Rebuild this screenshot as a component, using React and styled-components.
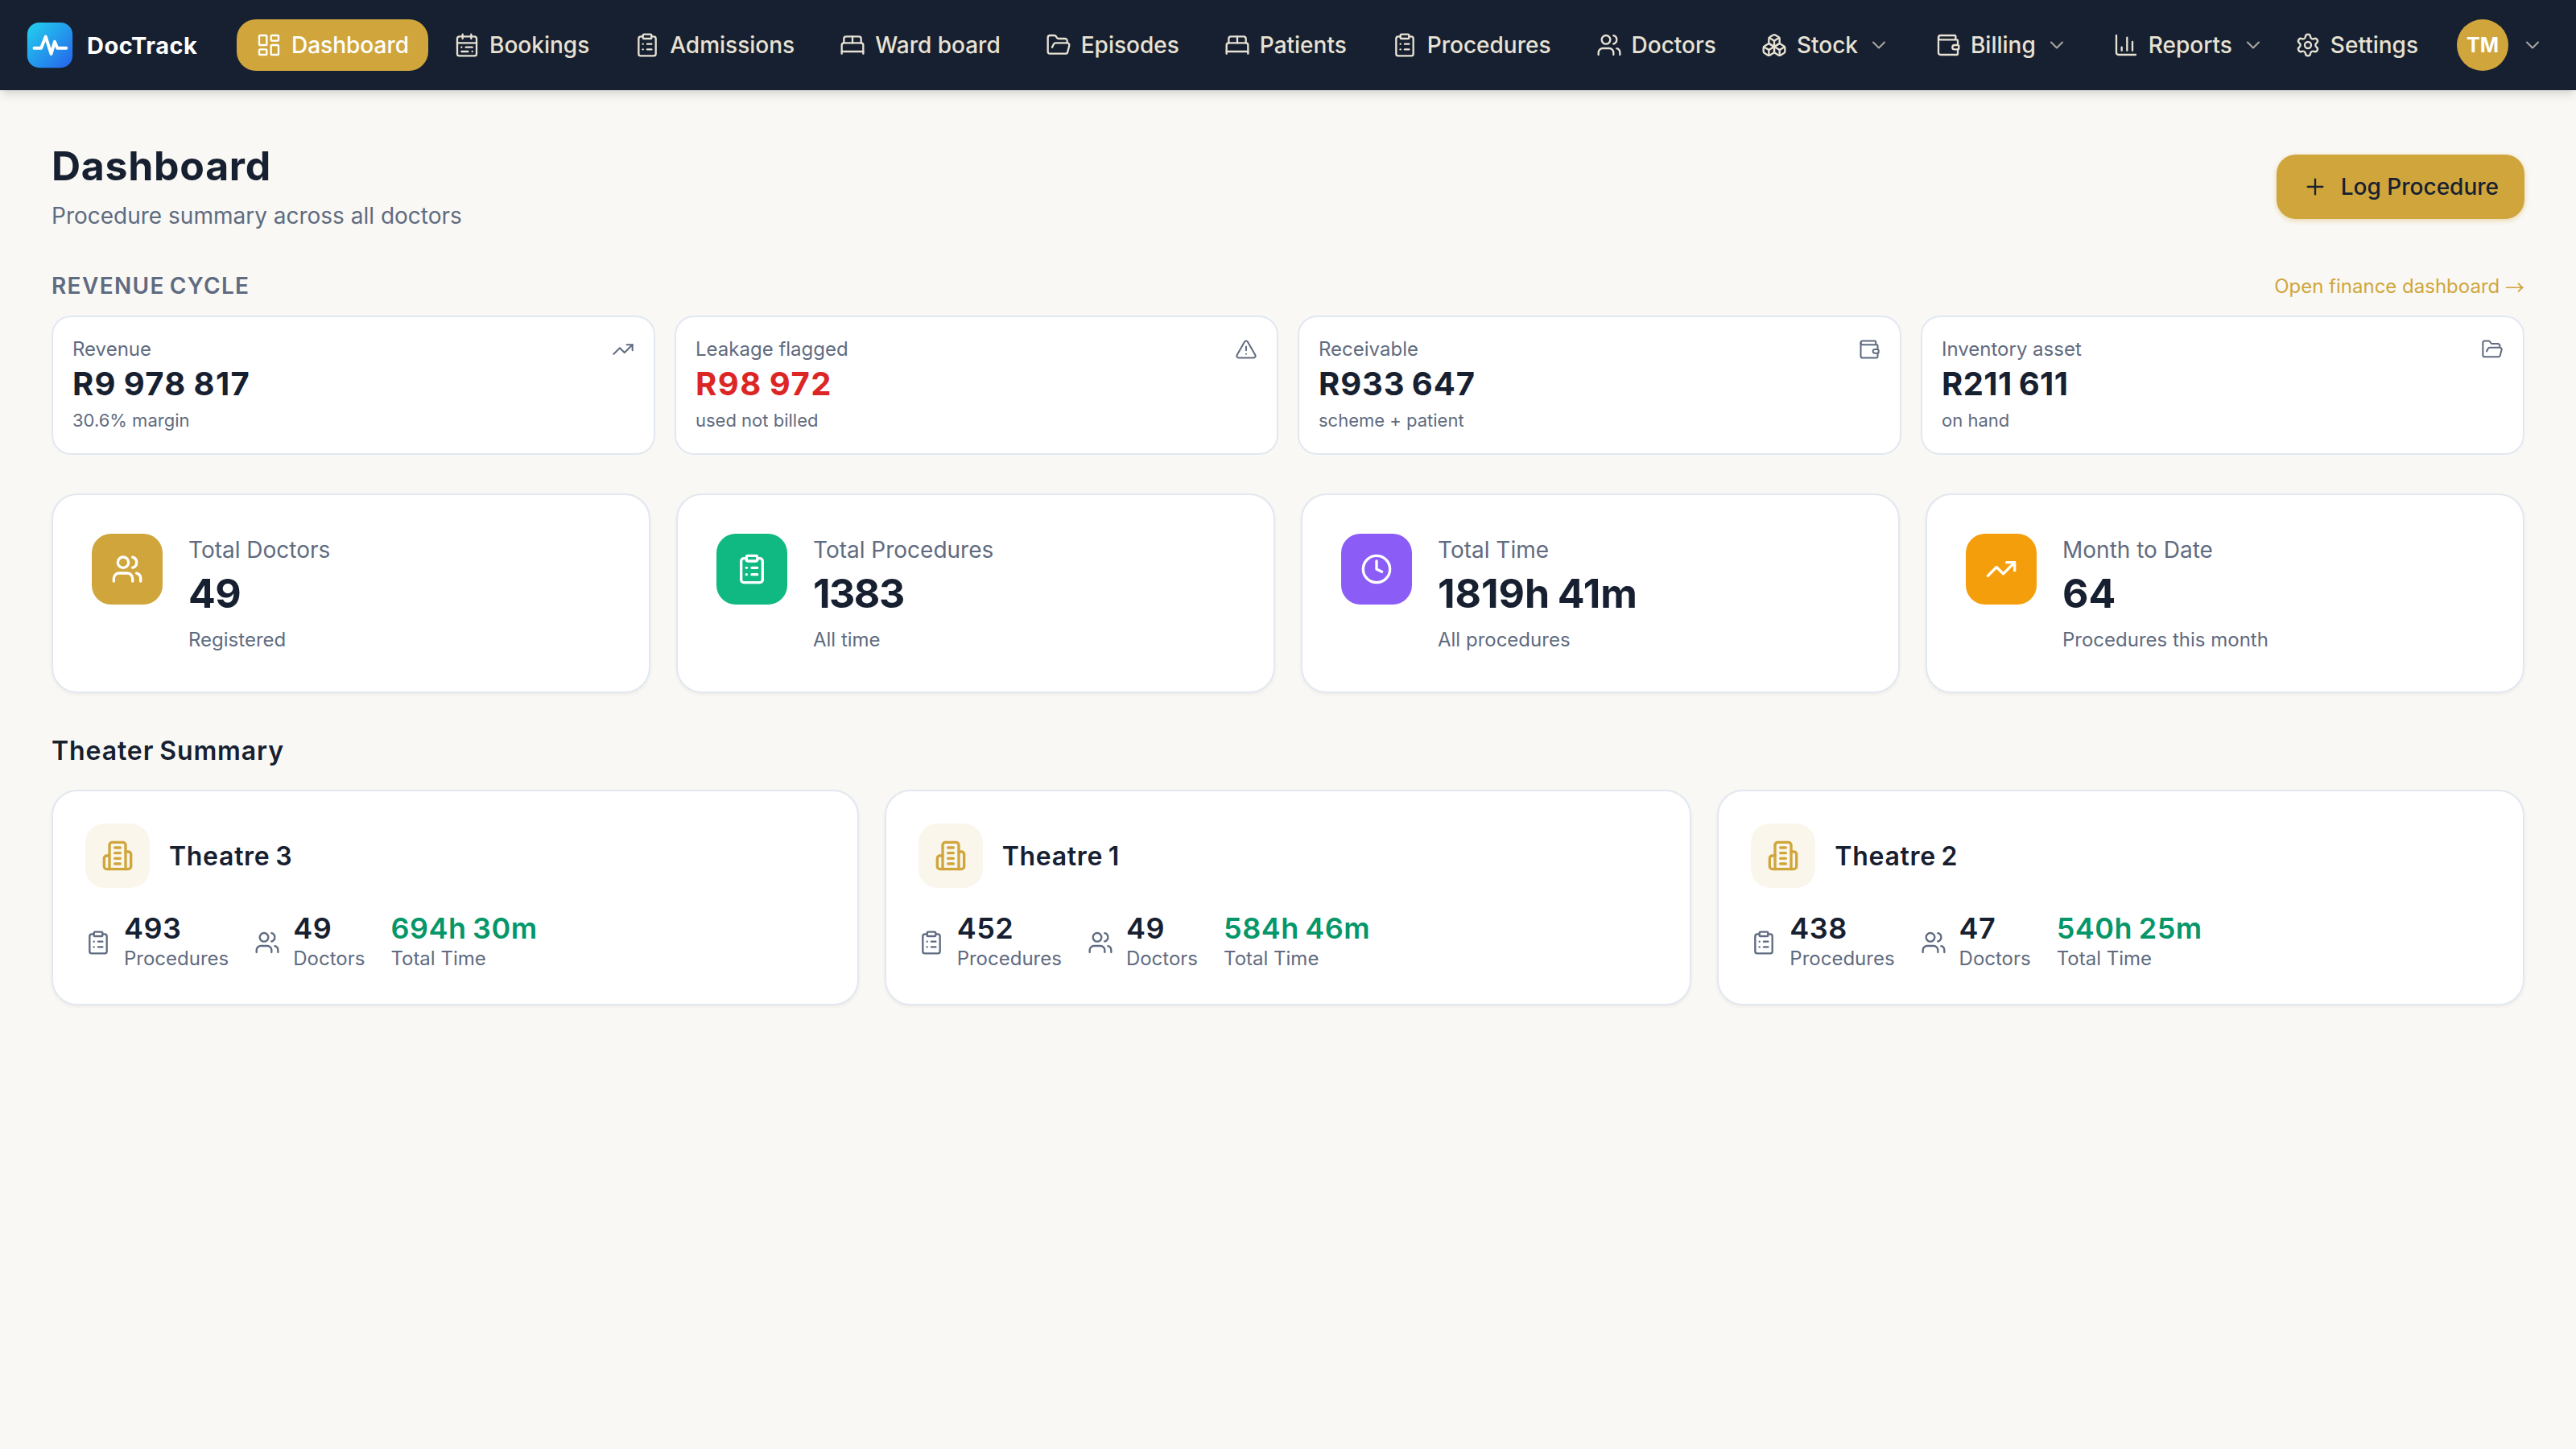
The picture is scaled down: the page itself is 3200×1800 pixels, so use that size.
import React from 'react';
import styled, { createGlobalStyle } from 'styled-components';
import {
  BedDouble,
  Boxes,
  CalendarRange,
  ChartColumn,
  ChevronDown,
  ClipboardList,
  Clock,
  FolderOpen,
  LayoutDashboard,
  Plus,
  Settings,
  TrendingUp,
  TriangleAlert,
  Users,
  Wallet,
} from 'lucide-react';

const navItems = [
  { label: 'Dashboard', icon: LayoutDashboard, active: true },
  { label: 'Bookings', icon: CalendarRange },
  { label: 'Admissions', icon: ClipboardList },
  { label: 'Ward board', icon: BedDouble },
  { label: 'Episodes', icon: FolderOpen },
  { label: 'Patients', icon: BedDouble },
  { label: 'Procedures', icon: ClipboardList },
  { label: 'Doctors', icon: Users },
  { label: 'Stock', icon: Boxes, menu: true },
  { label: 'Billing', icon: Wallet, menu: true },
  { label: 'Reports', icon: ChartColumn, menu: true },
];

const revenueData = [
  { label: 'Revenue', value: 'R9 978 817', note: '30.6% margin', icon: TrendingUp, tracking: 1.35 },
  { label: 'Leakage flagged', value: 'R98 972', note: 'used not billed', icon: TriangleAlert, tracking: 1.5, danger: true },
  { label: 'Receivable', value: 'R933 647', note: 'scheme + patient', icon: Wallet, tracking: 0.9 },
  { label: 'Inventory asset', value: 'R211 611', note: 'on hand', icon: FolderOpen, tracking: 0.45 },
];

const statData = [
  { label: 'Total Doctors', value: '49', note: 'Registered', icon: Users, color: '#d0a63c', tracking: -0.5 },
  { label: 'Total Procedures', value: '1383', note: 'All time', icon: ClipboardList, color: '#10b981', tracking: -1.5 },
  { label: 'Total Time', value: '1819h 41m', note: 'All procedures', icon: Clock, color: '#8b5cf6', tracking: -0.05 },
  { label: 'Month to Date', value: '64', note: 'Procedures this month', icon: TrendingUp, color: '#f59e0b', tracking: 0 },
];

const theatreData = [
  { name: 'Theatre 3', procedures: 493, doctors: 49, time: '694h 30m' },
  { name: 'Theatre 1', procedures: 452, doctors: 49, time: '584h 46m' },
  { name: 'Theatre 2', procedures: 438, doctors: 47, time: '540h 25m' },
];

const Logo = () => (
  <svg width='60' height='60' viewBox='0 0 32 32' fill='none'>
    <defs>
      <linearGradient id='logo' x1='1' y1='1' x2='31' y2='31' gradientUnits='userSpaceOnUse'>
        <stop stopColor='#22d3ee' />
        <stop offset='1' stopColor='#2563eb' />
      </linearGradient>
    </defs>
    <rect x='1' y='1' width='30' height='30' rx='8' fill='url(#logo)' />
    <path
      d='M5.6 18H10.2L13.2 10.4L16.8 21.8L19.2 13.8L20.9 18H26.8'
      stroke='#fff'
      strokeWidth='2.1'
      strokeLinecap='round'
      strokeLinejoin='round'
    />
  </svg>
);

const BuildingIcon = () => (
  <svg
    width='40'
    height='40'
    viewBox='0 0 24 24'
    fill='none'
    stroke='currentColor'
    strokeWidth='2'
    strokeLinecap='round'
    strokeLinejoin='round'
  >
    <path d='M6 22V4a2 2 0 0 1 2-2h8a2 2 0 0 1 2 2v18Z' />
    <path d='M6 12H4a2 2 0 0 0-2 2v6a2 2 0 0 0 2 2h2' />
    <path d='M18 9h2a2 2 0 0 1 2 2v9a2 2 0 0 1-2 2h-2' />
    <path d='M10 6h4' />
    <path d='M10 10h4' />
    <path d='M10 14h4' />
    <path d='M10 18h4' />
  </svg>
);

export default function App() {
  return (
    <>
      <GlobalStyle />
      <Header>
        <Brand>
          <Logo />
          <BrandName>DocTrack</BrandName>
        </Brand>
        <Nav>
          {navItems.map(({ label, icon: Icon, active, menu }) => (
            <NavLink key={label} $active={active}>
              <Icon size={32} strokeWidth={1.75} />
              {label}
              {menu && <Caret size={28} strokeWidth={1.75} />}
            </NavLink>
          ))}
        </Nav>
        <UserArea>
          <NavLink $flush>
            <Settings size={32} strokeWidth={1.75} />
            Settings
          </NavLink>
          <Avatar>TM</Avatar>
          <Caret size={28} strokeWidth={1.75} />
        </UserArea>
      </Header>
      <Main>
        <PageHead>
          <div>
            <Title>Dashboard</Title>
            <Subtitle>Procedure summary across all doctors</Subtitle>
          </div>
          <LogButton>
            <Plus size={32} strokeWidth={1.75} />
            Log Procedure
          </LogButton>
        </PageHead>

        <RevenueHead>
          <RevenueTitle>REVENUE CYCLE</RevenueTitle>
          <FinanceLink>
            Open finance dashboard <Arrow>→</Arrow>
          </FinanceLink>
        </RevenueHead>
        <RevenueGrid>
          {revenueData.map(({ label, value, note, icon: Icon, tracking, danger }) => (
            <RevenueCard key={label}>
              <RevenueLabel>
                {label}
                <Icon size={28} strokeWidth={1.75} />
              </RevenueLabel>
              <RevenueValue $danger={danger} $tracking={tracking}>
                {value}
              </RevenueValue>
              <RevenueNote>{note}</RevenueNote>
            </RevenueCard>
          ))}
        </RevenueGrid>

        <StatGrid>
          {statData.map(({ label, value, note, icon: Icon, color, tracking }) => (
            <StatCard key={label}>
              <StatIcon $color={color}>
                <Icon size={40} strokeWidth={2} />
              </StatIcon>
              <div>
                <StatLabel>{label}</StatLabel>
                <StatValue $tracking={tracking}>{value}</StatValue>
                <StatNote>{note}</StatNote>
              </div>
            </StatCard>
          ))}
        </StatGrid>

        <SectionTitle>Theater Summary</SectionTitle>
        <TheatreGrid>
          {theatreData.map(({ name, procedures, doctors, time }) => (
            <TheatreCard key={name}>
              <TheatreHead>
                <TheatreIcon>
                  <BuildingIcon />
                </TheatreIcon>
                <TheatreName>{name}</TheatreName>
              </TheatreHead>
              <Metrics>
                <Metric>
                  <ClipboardList size={32} strokeWidth={1.75} />
                  <div>
                    <MetricValue>{procedures}</MetricValue>
                    <MetricLabel>Procedures</MetricLabel>
                  </div>
                </Metric>
                <Metric>
                  <Users size={32} strokeWidth={1.75} />
                  <div>
                    <MetricValue>{doctors}</MetricValue>
                    <MetricLabel>Doctors</MetricLabel>
                  </div>
                </Metric>
                <div>
                  <MetricValue $green>{time}</MetricValue>
                  <MetricLabel>Total Time</MetricLabel>
                </div>
              </Metrics>
            </TheatreCard>
          ))}
        </TheatreGrid>
      </Main>
    </>
  );
}

const GlobalStyle = createGlobalStyle`
  * {
    box-sizing: border-box;
    margin: 0;
  }
  body {
    min-height: 100vh;
    background: #f9f8f4;
    color: #172030;
    font-family: Inter, 'Liberation Sans', sans-serif;
    -webkit-font-smoothing: antialiased;
  }
  svg {
    display: block;
    flex-shrink: 0;
  }
`;

const Header = styled.header`
  display: flex;
  align-items: center;
  height: 112px;
  padding: 0 40px 0 32px;
  background: #172030;
  box-shadow: 0 8px 12px -2px rgba(0, 0, 0, 0.1),
    0 4px 8px -4px rgba(0, 0, 0, 0.1);
`;

const Brand = styled.div`
  display: flex;
  align-items: center;
  gap: 16px;
  width: 262px;
`;

const BrandName = styled.span`
  color: #fff;
  font-size: 29px;
  font-weight: 700;
  letter-spacing: 0.5px;
`;

const Nav = styled.nav`
  display: flex;
  gap: 8px;
`;

const NavLink = styled.a`
  display: flex;
  align-items: center;
  gap: 12px;
  height: 64px;
  padding: ${props => (props.$flush ? '0' : '0 24px')};
  border-radius: 24px;
  color: ${props => (props.$active ? '#fff' : '#e8e2d4')};
  background: ${props => (props.$active ? '#d0a63c' : 'transparent')};
  font-size: 28px;
  font-weight: 500;
  white-space: nowrap;
`;

const Caret = styled(ChevronDown)`
  color: #e8e2d4;
  opacity: 0.7;
`;

const UserArea = styled.div`
  display: flex;
  align-items: center;
  gap: 16px;
  margin-left: auto;
`;

const Avatar = styled.div`
  display: flex;
  align-items: center;
  justify-content: center;
  width: 64px;
  height: 64px;
  margin-left: 32px;
  border-radius: 50%;
  background: #d0a63c;
  color: #fff;
  font-size: 25px;
  font-weight: 700;
`;

const Main = styled.main`
  padding: 64px 64px 0;
`;

const PageHead = styled.div`
  display: flex;
  align-items: center;
  justify-content: space-between;
  height: 112px;
  margin-bottom: 48px;
`;

const Title = styled.h1`
  font-size: 50px;
  font-weight: 700;
  line-height: 60px;
  letter-spacing: 0.7px;
`;

const Subtitle = styled.p`
  margin-top: 12px;
  color: #5f6b80;
  font-size: 28px;
  line-height: 40px;
`;

const LogButton = styled.button`
  display: flex;
  align-items: center;
  gap: 16px;
  height: 80px;
  padding: 0 32px;
  border: none;
  border-radius: 24px;
  background: #d0a63c;
  box-shadow: 0 2px 6px rgba(208, 166, 60, 0.4);
  color: #172030;
  font-family: inherit;
  font-size: 28px;
  font-weight: 500;
`;

const RevenueHead = styled.div`
  display: flex;
  align-items: center;
  justify-content: space-between;
  height: 40px;
  margin-bottom: 16px;
  padding-bottom: 2px;
`;

const RevenueTitle = styled.h2`
  color: #5f6b80;
  font-size: 28px;
  font-weight: 600;
  letter-spacing: 1.35px;
  word-spacing: -2.5px;
`;

const FinanceLink = styled.a`
  margin-top: 2px;
  color: #d0a63c;
  font-size: 24px;
  line-height: 36px;
`;

const Arrow = styled.span`
  font-family: 'Noto Sans CJK SC', sans-serif;
  line-height: 1;
  vertical-align: -2px;
`;

const RevenueGrid = styled.section`
  display: grid;
  grid-template-columns: repeat(4, 1fr);
  gap: 24px;
  margin-bottom: 48px;
`;

const RevenueCard = styled.div`
  padding: 24px;
  border: 2px solid #e2e8f0;
  border-radius: 24px;
  background: #fff;
`;

const RevenueLabel = styled.div`
  display: flex;
  align-items: center;
  justify-content: space-between;
  color: #5f6b80;
  font-size: 24px;
  line-height: 32px;
`;

const RevenueValue = styled.div`
  color: ${props => (props.$danger ? '#dc2626' : '#172030')};
  font-size: 40px;
  font-weight: 700;
  line-height: 53px;
  letter-spacing: ${props => props.$tracking}px;
  word-spacing: -2px;
`;

const RevenueNote = styled.div`
  margin-top: 3px;
  color: #5f6b80;
  font-size: 22px;
  line-height: 33px;
`;

const StatGrid = styled.section`
  display: grid;
  grid-template-columns: repeat(4, 1fr);
  gap: 32px;
  margin-bottom: 48px;
`;

const Card = styled.div`
  border: 2px solid #e2e8f0;
  border-radius: 32px;
  background: #fff;
  box-shadow: 0 2px 4px rgba(0, 0, 0, 0.05);
`;

const StatCard = styled(Card)`
  display: flex;
  gap: 32px;
  padding: 48px;
`;

const StatIcon = styled.div`
  display: flex;
  align-items: center;
  justify-content: center;
  width: 88px;
  height: 88px;
  border-radius: 24px;
  background: ${props => props.$color};
  color: #fff;
`;

const StatLabel = styled.div`
  color: #5f6b80;
  font-size: 28px;
  line-height: 40px;
`;

const StatValue = styled.div`
  margin: 4px 0 12px;
  font-size: 50px;
  font-weight: 700;
  line-height: 60px;
  letter-spacing: ${props => props.$tracking}px;
  word-spacing: -2px;
`;

const StatNote = styled.div`
  color: #5f6b80;
  font-size: 24px;
  line-height: 32px;
`;

const SectionTitle = styled.h2`
  margin-bottom: 24px;
  font-size: 32px;
  font-weight: 600;
  line-height: 48px;
  letter-spacing: 0.9px;
  word-spacing: -2px;
`;

const TheatreGrid = styled.section`
  display: grid;
  grid-template-columns: repeat(3, 1fr);
  gap: 32px;
`;

const TheatreCard = styled(Card)`
  padding: 40px 40px 38px;
`;

const TheatreHead = styled.div`
  display: flex;
  align-items: center;
  gap: 24px;
  margin-bottom: 30px;
`;

const TheatreIcon = styled.div`
  display: flex;
  align-items: center;
  justify-content: center;
  width: 80px;
  height: 80px;
  border-radius: 24px;
  background: #faf6eb;
  color: #d0a63c;
`;

const TheatreName = styled.h3`
  font-size: 32px;
  font-weight: 600;
  letter-spacing: 0.7px;
  word-spacing: -2px;
`;

const Metrics = styled.div`
  display: flex;
  gap: 32px;
`;

const Metric = styled.div`
  display: flex;
  align-items: center;
  gap: 16px;
  color: #5f6b80;
`;

const MetricValue = styled.div`
  color: ${props => (props.$green ? '#059669' : '#172030')};
  font-size: 36px;
  font-weight: 600;
  line-height: 40px;
  letter-spacing: 0.5px;
  word-spacing: -2px;
`;

const MetricLabel = styled.div`
  color: #5f6b80;
  font-size: 24px;
  line-height: 36px;
`;
